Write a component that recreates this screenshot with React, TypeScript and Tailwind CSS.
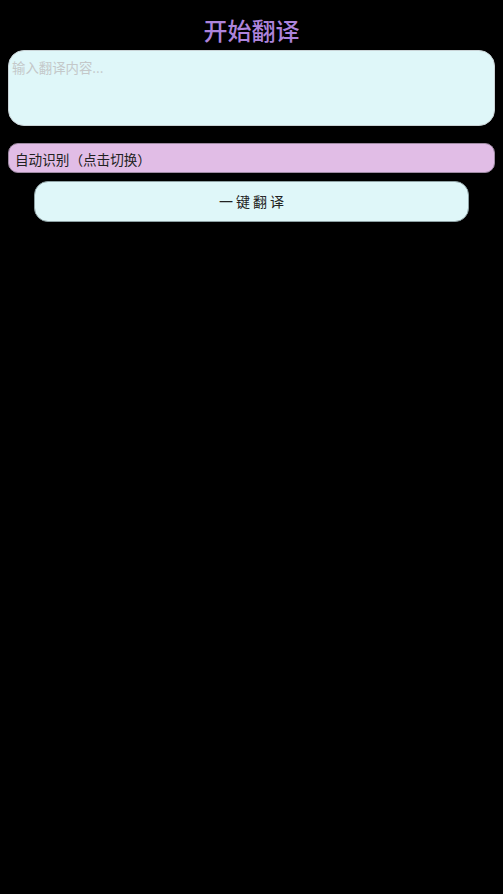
import { useState } from "react";

var LANGS = ["自动识别", "中文", "英语", "日语", "韩语"];

export default function App() {
  var [text, setText] = useState("");
  var [lang, setLang] = useState(0);

  return (
    <div className="min-h-[894px] bg-black px-2 pt-[13px]" style={{ fontFamily: '"Noto Sans CJK SC", "Noto Sans", sans-serif' }}>
      <h1 className="text-center text-[24px] leading-[34px] font-medium text-[#ad84dc]">开始翻译</h1>

      <textarea
        value={text}
        onChange={(e) => setText(e.target.value)}
        placeholder="输入翻译内容..."
        className="mt-[3px] block w-full h-[76px] resize-none rounded-[16px] border border-[#c9d3d6] bg-[#dff7f9] px-[3px] py-[5px] text-[13.4px] leading-[22px] text-gray-800 placeholder:text-[#c4c8c9] outline-none"
      />

      <button
        onClick={() => setLang((lang + 1) % LANGS.length)}
        className="mt-[17px] flex w-full h-[30px] items-center rounded-[10px] border border-[#9e8aa3] bg-[#e1bde6] px-[6px] pt-[2px] text-[13.6px] text-[#222]"
      >
        {LANGS[lang]}（点击切换）
      </button>

      <div className="px-[26px] pt-[8px]">
        <button className="block w-full h-[41px] rounded-[14px] border border-[#8ea1a4] bg-[#dff7f9] pl-[3px] text-[14px] tracking-[3px] text-[#222]">
          一键翻译
        </button>
      </div>
    </div>
  );
}
